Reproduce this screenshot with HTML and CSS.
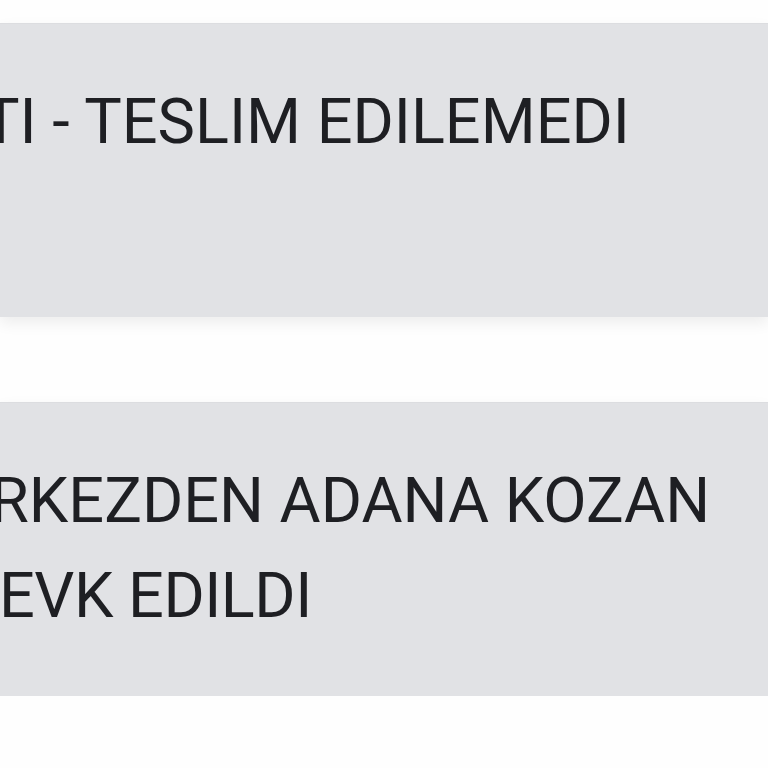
FILE: index.html
```html
<!DOCTYPE html>
<html>

<head>
    <title>Gönderi Hareketleri</title>
    <meta name="viewport" content="width=device-width, initial-scale=1.0">
    <link rel="stylesheet" href="styles.css">
</head>

<body>
    <div class="list">
        <div class="card">
            <div class="status">
                <div class="line line-first">TI - TESLIM EDILEMEDI</div>
            </div>
        </div>
        <div class="card">
            <div class="status">
                <div class="line line-second">RKEZDEN ADANA KOZAN</div>
                <div class="line line-third">EVK EDILDI</div>
            </div>
        </div>
    </div>
</body>

</html>
```

FILE: styles.css
```css
* {
    box-sizing: border-box;
    margin: 0;
    padding: 0;
}

body {
    font-family: Roboto, "Noto Sans", Arial, sans-serif;
    background: #fefefe;
    overflow: hidden;
}

.list {
    display: flex;
    flex-direction: column;
    gap: 85px;
    padding-top: 23px;
}

.card {
    background: #e1e2e5;
    height: 294px;
    box-shadow: 0 6px 14px rgba(0, 0, 0, 0.07);
    border-top: 1px solid #dcdde0;
    overflow: hidden;
}

.status {
    padding-top: 50px;
    color: #1e1f23;
    font-size: 63px;
    line-height: 95px;
    white-space: nowrap;
}

.line-first {
    margin-left: -18px;
}

.line-second {
    margin-left: -10px;
}

.line-third {
    margin-left: -1px;
    letter-spacing: -0.5px;
}
```
